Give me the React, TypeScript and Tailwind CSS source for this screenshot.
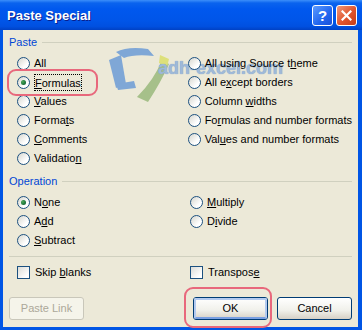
import React from "react";

const FONT = { fontFamily: '"Liberation Sans", Arial, sans-serif' };

function Radio({ checked = false }: { checked?: boolean }) {
  return (
    <span className="relative flex h-[13px] w-[13px] shrink-0 items-center justify-center rounded-full border border-[#1C5180] bg-[linear-gradient(135deg,#D6D6CE,#FFFFFF_70%)]">
      {checked && (
        <span className="h-[5px] w-[5px] rounded-full bg-[radial-gradient(circle_at_35%_35%,#4FA85A,#1E7A3A_55%,#1A4E2A)]" />
      )}
    </span>
  );
}

function Check() {
  return (
    <span className="h-[13px] w-[13px] shrink-0 border border-[#1C5180] bg-[linear-gradient(135deg,#DCDCD7,#FFFFFF_80%)]" />
  );
}

function Label({ pre = "", u = "", post = "" }: { pre?: string; u?: string; post?: string }) {
  return (
    <span className="whitespace-nowrap text-[11px] leading-[13px] text-black">
      {pre}
      {u && <u className="underline underline-offset-[1px]">{u}</u>}
      {post}
    </span>
  );
}

function RadioRow({
  checked,
  pre,
  u,
  post,
  focus,
}: {
  checked?: boolean;
  pre?: string;
  u?: string;
  post?: string;
  focus?: boolean;
}) {
  return (
    <div className="flex h-[19px] items-center gap-[4px]">
      <Radio checked={checked} />
      {focus ? (
        <span className="border border-dotted border-black leading-[13px]">
          <Label pre={pre} u={u} post={post} />
        </span>
      ) : (
        <Label pre={pre} u={u} post={post} />
      )}
    </div>
  );
}

function GroupLabel({ text }: { text: string }) {
  return (
    <div className="flex h-[13px] items-center gap-[5px]">
      <span className="text-[11px] leading-[13px] text-[#0046D5]">{text}</span>
      <span className="h-px flex-1 bg-[#D0D0BF]" />
    </div>
  );
}

function XpButton({ children, def, disabled }: { children: React.ReactNode; def?: boolean; disabled?: boolean }) {
  if (disabled) {
    return (
      <div className="flex h-[23px] w-[75px] items-center justify-center rounded-[3px] border border-[#C9C7BA] bg-[#F5F4EA] text-[11px] text-[#ACA899]">
        {children}
      </div>
    );
  }
  return (
    <div className="h-[23px] w-[75px] rounded-[3px] border border-[#003C74] bg-[linear-gradient(180deg,#FFFFFF,#F0F0EA_60%,#D6D0C5)]">
      <div
        className={
          "flex h-full w-full items-center justify-center rounded-[2px] text-[11px] text-black " +
          (def ? "border-2 border-[#B3CAEF] border-b-[#7AA0E2]" : "")
        }
      >
        {children}
      </div>
    </div>
  );
}

export default function App() {
  return (
    <div className="relative h-[330px] w-[362px] overflow-hidden bg-[#0055E5]" style={FONT}>
      {/* title bar */}
      <div className="flex h-[30px] items-center bg-[linear-gradient(180deg,#3C8FFA_0%,#0A63EE_10%,#0058EE_30%,#0055E8_70%,#0050E0_88%,#0041C4_100%)] pl-[7px] pr-[5px]">
        <span className="flex-1 text-[13px] font-bold leading-none text-white [text-shadow:1px_1px_0_#0A1E8C]">
          Paste Special
        </span>
        <div className="flex gap-[3px]">
          <div className="flex h-[21px] w-[21px] items-center justify-center rounded-[3px] border border-white bg-[linear-gradient(135deg,#5C9BFF,#2266EE_60%,#1A50D8)] text-[15px] font-bold leading-none text-white">
            ?
          </div>
          <div className="flex h-[21px] w-[21px] items-center justify-center rounded-[3px] border border-white bg-[linear-gradient(135deg,#F0987A,#E0542D_55%,#C73D18)]">
            <svg width="11" height="11" viewBox="0 0 11 11">
              <path d="M1.5 1.5 L9.5 9.5 M9.5 1.5 L1.5 9.5" stroke="white" strokeWidth="2.2" strokeLinecap="square" />
            </svg>
          </div>
        </div>
      </div>

      {/* body background */}
      <div className="absolute bottom-[3px] left-[3px] right-[4px] top-[30px] bg-[#ECE9D8]" />

      {/* watermark (behind content) */}
      <div className="pointer-events-none absolute left-[104px] top-[46px]">
        <svg width="70" height="58" viewBox="0 0 70 58">
          <path d="M12 6 Q24 0 44 3 L50 10 Q30 8 20 12 Z" fill="#7FA7D6" />
          <path d="M5 14 L17 9 L22 38 L12 42 Z" fill="#7FA7D6" />
          <path d="M12 38 L30 35 L32 42 L14 44 Z" fill="#7FA7D6" />
          <path d="M58 14 L65 18 Q57 36 44 56 L33 51 Q50 34 58 14 Z" fill="#A6C08A" />
          <path d="M56 9 L65 13 L63 21 L55 17 Z" fill="#DDE07A" />
        </svg>
      </div>
      <div className="pointer-events-none absolute left-[158px] top-[57px] text-[18px] font-bold leading-[22px] text-[#9FB9D8] [text-shadow:0_0_1px_#6F94C4]">
        adh-excel.com
      </div>

      {/* body */}
      <div className="relative ml-[3px] mr-[4px] flex h-[297px] flex-col px-[6px] pt-[6px]">
        <GroupLabel text="Paste" />
        <div className="relative mt-[5px] flex pl-[8px]">
          <div className="flex w-[173px] flex-col">
            <RadioRow pre="All" />
            <RadioRow checked focus u="F" post="ormulas" />
            <RadioRow u="V" post="alues" />
            <RadioRow pre="Forma" u="t" post="s" />
            <RadioRow u="C" post="omments" />
            <RadioRow pre="Validatio" u="n" />
          </div>
          <div className="flex flex-col">
            <RadioRow pre="All using Source t" u="h" post="eme" />
            <RadioRow pre="All e" u="x" post="cept borders" />
            <RadioRow pre="Column " u="w" post="idths" />
            <RadioRow pre="Fo" u="r" post="mulas and number formats" />
            <RadioRow pre="Val" u="u" post="es and number formats" />
          </div>
        </div>

        <div className="mt-[7px]">
          <GroupLabel text="Operation" />
        </div>
        <div className="mt-[5px] flex pl-[8px]">
          <div className="flex w-[173px] flex-col">
            <RadioRow checked pre="N" u="o" post="ne" />
            <RadioRow pre="A" u="d" post="d" />
            <RadioRow u="S" post="ubtract" />
          </div>
          <div className="flex flex-col">
            <RadioRow u="M" post="ultiply" />
            <RadioRow pre="D" u="i" post="vide" />
          </div>
        </div>

        <div className="mt-[6px] h-px bg-[#D0D0BF]" />

        <div className="mt-[6px] flex pl-[8px]">
          <div className="flex h-[19px] w-[173px] items-center gap-[5px]">
            <Check />
            <Label pre="Skip " u="b" post="lanks" />
          </div>
          <div className="flex h-[19px] items-center gap-[5px]">
            <Check />
            <Label pre="Transpos" u="e" />
          </div>
        </div>

        <div className="mt-[15px] flex items-center justify-between">
          <XpButton disabled>Paste Link</XpButton>
          <div className="flex gap-[9px]">
            <XpButton def>OK</XpButton>
            <XpButton>Cancel</XpButton>
          </div>
        </div>
      </div>

      {/* highlight overlays */}
      <div className="pointer-events-none absolute left-[7px] top-[69px] h-[27px] w-[91px] rounded-[9px] border-2 border-[#E8687C]" />
      <div className="pointer-events-none absolute left-[184px] top-[287px] h-[41px] w-[88px] rounded-[9px] border-2 border-[#E8687C]" />
    </div>
  );
}
